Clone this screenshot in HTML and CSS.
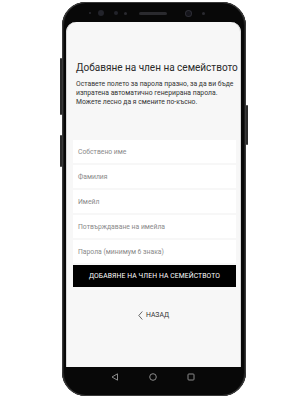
FILE: index.html
```html
<!DOCTYPE html>
<html lang="bg">
<head>
<meta charset="utf-8">
<title>Добавяне на член на семейството</title>
<link rel="stylesheet" href="styles.css">
</head>
<body>
<div class="phone">
  <span class="btn btn-l1"></span>
  <span class="btn btn-l2"></span>
  <span class="btn btn-r1"></span>
  <div class="bezel">
    <span class="dot d1"></span>
    <span class="dot d2"></span>
    <span class="dot d3"></span>
    <span class="dot d4"></span>
    <span class="speaker"></span>
    <span class="dot cam"></span>
    <span class="dot d5"></span>
  </div>
  <div class="screen">
    <h1 class="title">Добавяне на член на семейството</h1>
    <p class="intro">Оставете полето за парола празно, за да ви бъде изпратена автоматично генерирана парола. Можете лесно да я смените по-късно.</p>
    <form class="form">
      <div class="field">Собствено име</div>
      <div class="field">Фамилия</div>
      <div class="field">Имейл</div>
      <div class="field">Потвърждаване на имейла</div>
      <div class="field">Парола (минимум 6 знака)</div>
      <div class="submit">ДОБАВЯНЕ НА ЧЛЕН НА СЕМЕЙСТВОТО</div>
    </form>
    <div class="back">
      <svg class="chev" width="5" height="9" viewBox="0 0 5 9"><path d="M4.3 0.5 L0.8 4.5 L4.3 8.5" fill="none" stroke="#444" stroke-width="0.8"/></svg>
      <span>НАЗАД</span>
    </div>
  </div>
  <div class="navbar">
    <svg width="8" height="8" viewBox="0 0 8 8"><path d="M6.5 0.8 L1 4 L6.5 7.2 Z" fill="none" stroke="#9a9a9a" stroke-width="0.9" stroke-linejoin="round"/></svg>
    <svg width="8" height="8" viewBox="0 0 8 8"><circle cx="4" cy="4" r="3.3" fill="none" stroke="#9a9a9a" stroke-width="0.9"/></svg>
    <svg width="8" height="8" viewBox="0 0 8 8"><rect x="1" y="1" width="6" height="6" rx="0.8" fill="none" stroke="#9a9a9a" stroke-width="0.9"/></svg>
  </div>
</div>
</body>
</html>
```

FILE: styles.css
```css
html, body {
  margin: 0;
  padding: 0;
  background: #ffffff;
}
body {
  width: 300px;
  height: 400px;
  overflow: hidden;
  font-family: Roboto, "Noto Sans", "Liberation Sans", sans-serif;
}
.phone {
  position: relative;
  margin: 2px 0 0 62px;
  width: 184px;
  height: 394px;
  box-sizing: border-box;
  padding: 0 5px 0 4px;
  border-radius: 24px;
  background: #080808;
  box-shadow: inset 0 0 0 1px #3a3a3a, inset 2px 0 0 #1c1c1c, inset -2px 0 0 #1c1c1c;
  display: flex;
  flex-direction: column;
}
.btn {
  position: absolute;
  width: 2px;
  background: #2a2a2a;
  border-radius: 1px;
}
.btn-l1 { left: -2px; top: 56px; height: 57px; }
.btn-l2 { left: -2px; top: 133px; height: 32px; }
.btn-r1 { right: -2px; top: 103px; height: 40px; }
.bezel {
  height: 20px;
  flex: none;
  display: flex;
  align-items: center;
  padding-top: 2px;
  box-sizing: border-box;
}
.dot {
  border-radius: 50%;
  background: #1e1e24;
  flex: none;
}
.d1 { width: 2px; height: 2px; margin-left: 23px; background: #2a2a30; }
.d2 { width: 6px; height: 6px; margin-left: 7px; background: #22232a; }
.d3 { width: 4px; height: 4px; margin-left: 10px; background: #22232a; }
.d4 { width: 3px; height: 3px; margin-left: 6px; background: #2a2a30; }
.speaker {
  width: 28px;
  height: 3px;
  margin-left: 12px;
  border-radius: 2px;
  background: #2a2a2e;
  flex: none;
}
.cam { width: 5px; height: 5px; margin-left: 19px; background: #15151b; box-shadow: 0 0 0 1px #2c2c34; }
.d5 { width: 3px; height: 3px; margin-left: 11px; background: #2a2a30; }
.screen {
  flex: none;
  height: 345px;
  background: #f7f7f7;
  border-radius: 10px 10px 0 0;
  padding: 39px 5px 0 7px;
  box-sizing: border-box;
  box-shadow: inset 1px 0 0 #d8d8d8, inset -1px 0 0 #d8d8d8;
}
.title {
  margin: 0 0 6px 3px;
  font-size: 10px;
  line-height: 13px;
  font-weight: 400;
  color: #2a2a2a;
  white-space: nowrap;
}
.intro {
  margin: 0 0 33px 3px;
  font-size: 6.8px;
  line-height: 9px;
  color: #333;
}
.form {
  display: flex;
  flex-direction: column;
  gap: 2px;
  margin: 0;
}
.field {
  height: 23px;
  background: #ffffff;
  display: flex;
  align-items: center;
  padding-left: 5px;
  font-size: 6.8px;
  color: #8a8a8a;
}
.submit {
  height: 22px;
  background: #000;
  color: #fff;
  display: flex;
  align-items: center;
  justify-content: center;
  font-size: 6.8px;
  letter-spacing: 0.1px;
}
.back {
  margin-top: 23px;
  display: flex;
  align-items: center;
  justify-content: center;
  gap: 3px;
  font-size: 6.8px;
  line-height: 10px;
  color: #333;
  padding-right: 2px;
}
.chev { display: block; }
.navbar {
  flex: none;
  height: 20px;
  display: flex;
  align-items: center;
  justify-content: center;
  gap: 30px;
  padding-right: 1px;
}
.navbar svg { display: block; }
```
